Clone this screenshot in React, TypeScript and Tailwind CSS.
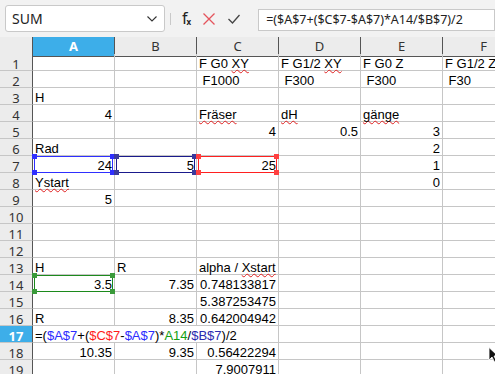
import React from "react";

type Cell = { v?: React.ReactNode; num?: boolean; sel?: "blue" | "navy" | "red" | "green" };

// spell-check squiggle under a word
const W = ({ children }: { children: React.ReactNode }) => (
  <span className="relative z-10 underline decoration-wavy decoration-[#e02020] decoration-1 underline-offset-[1px] [text-decoration-skip-ink:none]">
    {children}
  </span>
);

const selStyles = {
  blue: { box: "border-[#2f2fff]", dot: "bg-[#2f2fff]" },
  navy: { box: "border-[#1a1a8c]", dot: "bg-[#3a3a9c]" },
  red: { box: "border-[#ff2020]", dot: "bg-[#ff4040]" },
  green: { box: "border-[#1c8a1c]", dot: "bg-[#3a9a3a]" },
};

const Sel = ({ kind }: { kind: keyof typeof selStyles }) => {
  const s = selStyles[kind];
  return (
    <div className={`absolute left-[1px] right-[1px] top-0 -bottom-px border ${s.box}`}>
      <div className={`absolute -left-[3px] -top-[3px] w-[5px] h-[5px] ${s.dot}`} />
      <div className={`absolute -right-[3px] -top-[3px] w-[5px] h-[5px] ${s.dot}`} />
      <div className={`absolute -left-[3px] -bottom-[3px] w-[5px] h-[5px] ${s.dot}`} />
      <div className={`absolute -right-[3px] -bottom-[3px] w-[5px] h-[5px] ${s.dot}`} />
    </div>
  );
};

const t = (v: React.ReactNode): Cell => ({ v });
const n = (v: string): Cell => ({ v, num: true });
const e: Cell = {};

const rows: Cell[][] = [
  [e, e, t(<>F G0 <W>XY</W></>), t(<>F G1/2 <W>XY</W></>), t("F G0 Z"), t("F G1/2 Z")],
  [e, e, t("\u00a0F1000"), t("\u00a0F300"), t("\u00a0F300"), t("\u00a0F30")],
  [t("H"), e, e, e, e, e],
  [n("4"), e, t(<W>Fräser</W>), t(<W>dH</W>), t(<W>gänge</W>), e],
  [e, e, n("4"), n("0.5"), n("3"), e],
  [t("Rad"), e, e, e, n("2"), e],
  [{ v: "24", num: true, sel: "blue" }, { v: "5", num: true, sel: "navy" }, { v: "25", num: true, sel: "red" }, e, n("1"), e],
  [t(<W>Ystart</W>), e, e, e, n("0"), e],
  [n("5"), e, e, e, e, e],
  [e, e, e, e, e, e],
  [e, e, e, e, e, e],
  [e, e, e, e, e, e],
  [t("H"), t("R"), t(<>alpha / <W>Xstart</W></>), e, e, e],
  [{ v: "3.5", num: true, sel: "green" }, n("7.35"), n("0.748133817"), e, e, e],
  [e, e, n("5.387253475"), e, e, e],
  [t("R"), n("8.35"), n("0.642004942"), e, e, e],
  [],
  [n("10.35"), n("9.35"), n("0.56422294"), e, e, e],
  [e, e, n("7.9007911"), e, e, e],
];

const cols = ["A", "B", "C", "D", "E", "F"];

const cellCls =
  "border-r border-b border-[#c6c6c6] px-[2px] pt-[2px] text-[13px] leading-[16px] text-black whitespace-nowrap";

export default function App() {
  return (
    <div className="relative w-[495px] h-[374px] overflow-hidden bg-white font-['Liberation_Sans',sans-serif]">
      {/* toolbar */}
      <div className="h-[37px] bg-[#f2f2f2] flex items-start font-['Noto_Sans',sans-serif] whitespace-nowrap">
        <div className="ml-[5px] mt-[5px] w-[160px] h-[27px] shrink-0 bg-white border border-[#c9c9c9] rounded-[3px] flex items-center justify-between pl-[6px] pr-[7px]">
          <span className="text-[14px] text-[#222]">SUM</span>
          <svg width="10" height="6" viewBox="0 0 10 6" fill="none">
            <path d="M0.5 0.5 L5 5 L9.5 0.5" stroke="#333" strokeWidth="1.1" />
          </svg>
        </div>
        <div className="ml-[5px] mt-[13px] w-px h-[12px] bg-[#c9c9c9] shrink-0" />
        <div className="ml-[11px] mt-[9px] shrink-0 flex items-end text-[#222]">
          <span className="text-[16px] leading-[18px]">f</span>
          <span className="text-[8px] font-bold leading-[10px] -ml-px">x</span>
        </div>
        <svg className="ml-[12px] mt-[13px] shrink-0" width="12" height="12" viewBox="0 0 12 12">
          <path d="M0.5 0.5 L11.5 11.5 M11.5 0.5 L0.5 11.5" stroke="#e4545c" strokeWidth="1.3" />
        </svg>
        <svg className="ml-[13px] mt-[14px] shrink-0" width="12" height="10" viewBox="0 0 12 10">
          <path d="M0.5 5 L4.5 9 L11.5 1" stroke="#444" strokeWidth="1.3" fill="none" />
        </svg>
        <div className="ml-[18px] mt-[9px] h-[22px] flex-1 bg-white border border-[#c9c9c9] flex items-center pl-[7px] text-[12.5px] text-[#222]">
          =($A$7+($C$7-$A$7)*A14/$B$7)/2
        </div>
      </div>

      {/* grid */}
      <div className="grid w-max grid-cols-[33px_repeat(6,82px)] auto-rows-[17px] font-['Liberation_Sans',sans-serif]">
        <div className="h-[20px] bg-[#ececec] border-r border-b border-[#555]" />
        {cols.map((c) => (
          <div
            key={c}
            className={`h-[20px] border-r border-b border-[#555] text-center text-[13px] leading-[19px] font-['Noto_Sans',sans-serif] ${
              c === "A" ? "bg-[#3daee9] text-white font-bold" : "bg-[#ececec] text-[#333]"
            }`}
          >
            {c}
          </div>
        ))}

        {rows.map((row, i) => {
          const num = i + 1;
          const active = num === 17;
          return (
            <React.Fragment key={num}>
              <div
                className={`border-r border-r-[#555] border-b border-b-[#c6c6c6] pt-[2px] text-center text-[13px] leading-[16px] font-['Noto_Sans',sans-serif] ${
                  active ? "bg-[#3daee9] text-white font-bold" : "bg-[#ececec] text-[#333]"
                }`}
              >
                {num}
              </div>
              {active ? (
                <>
                  <div className={`${cellCls} col-span-3`}>
                    =(<span className="text-[#2b2bff]">$A$7</span>+(
                    <span className="text-[#ff1c1c]">$C$7</span>-
                    <span className="text-[#2b2bff]">$A$7</span>)*
                    <span className="text-[#12a012]">A14</span>/
                    <span className="text-[#2a2ab0]">$B$7</span>)/2
                  </div>
                  <div className={cellCls} />
                  <div className={cellCls} />
                  <div className={cellCls} />
                </>
              ) : (
                row.map((c, j) => (
                  <div
                    key={j}
                    className={`${cellCls} ${c.num ? "text-right" : "text-left"} ${c.sel ? "relative" : ""}`}
                  >
                    {c.v}
                    {c.sel && <Sel kind={c.sel} />}
                  </div>
                ))
              )}
            </React.Fragment>
          );
        })}
      </div>

      {/* mouse pointer */}
      <svg className="absolute left-[488px] top-[347px]" width="10" height="16" viewBox="0 0 10 16">
        <path d="M1 0.5 L1 13 L4 10 L6.5 15 L8.5 14 L6 9 L10 9 Z" fill="#111" stroke="#fff" strokeWidth="0.8" />
      </svg>
    </div>
  );
}
